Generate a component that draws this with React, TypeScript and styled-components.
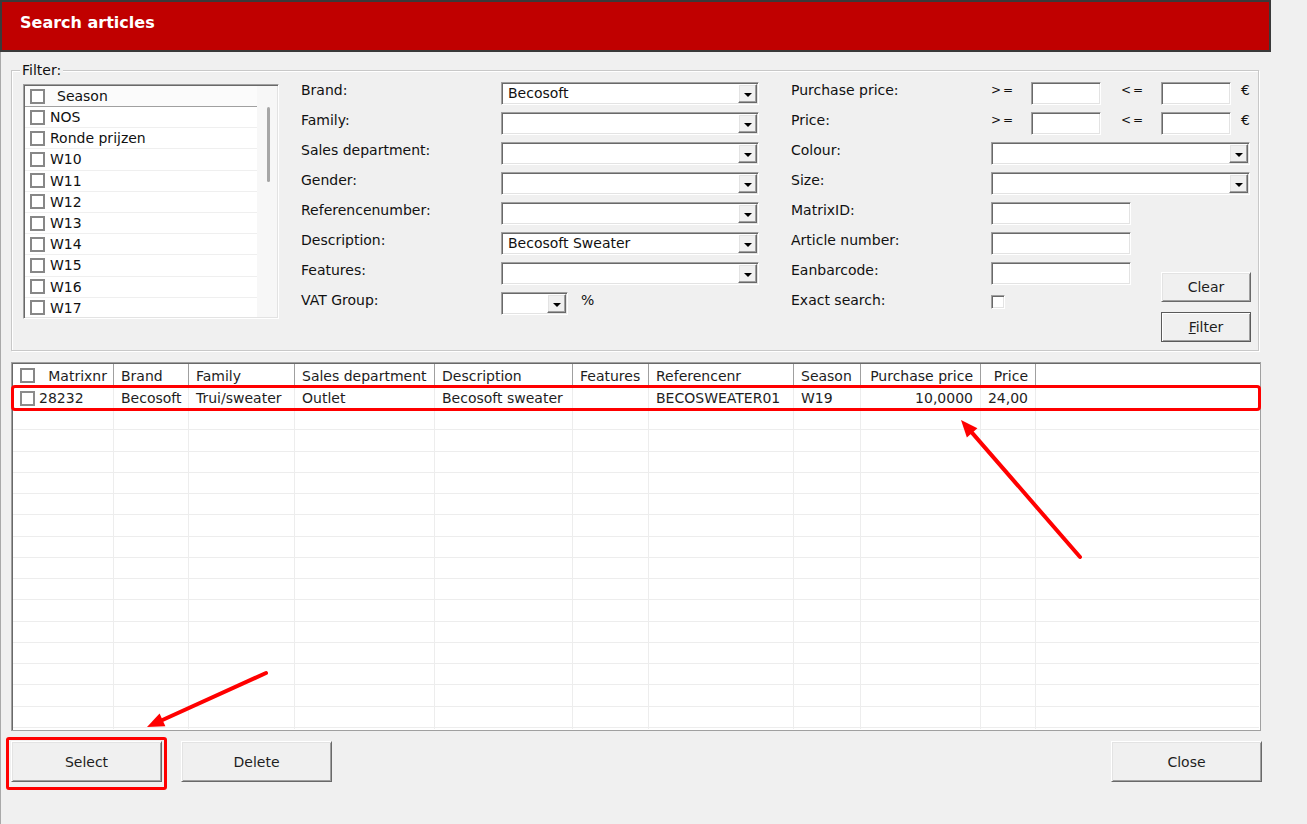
import React from 'react'
import styled, { createGlobalStyle, css } from 'styled-components'

const GlobalStyle = createGlobalStyle`
  html, body {
    margin: 0;
    padding: 0;
    background: #f0f0f0;
  }
  body {
    font-family: "DejaVu Sans", Verdana, sans-serif;
    font-size: 14px;
    color: #111;
  }
  * {
    box-sizing: border-box;
  }
`

// classic windows 3d "sunken" edit look
const sunken = css`
  border: 1px solid;
  border-color: #a0a0a0 #ffffff #ffffff #a0a0a0;
  box-shadow: inset 1px 1px 0 #696969, inset -1px -1px 0 #e3e3e3;
  padding: 1px;
  background: #fff;
`

const Window = styled.div`
  position: relative;
  width: 1307px;
  height: 824px;
  overflow: hidden;
  background: #f0f0f0;
`

const TitleBar = styled.div`
  width: 1271px;
  height: 52px;
  border: 2px solid #3a3a3a;
  background: #c00000;
  color: #fff;
  font-weight: bold;
  font-size: 16px;
  line-height: 18px;
  padding: 12px 0 0 18px;
`

const Body = styled.div`
  height: 772px;
  border-left: 1px solid #a9a9a9;
  padding: 18px 0 0 10px;
`

const GroupBox = styled.div`
  position: relative;
  width: 1248px;
  height: 281px;
  border: 1px solid #c8c8c8;
  box-shadow: inset 1px 1px 0 #fff, 1px 1px 0 #fff;
  padding: 11px 0 0 11px;
  display: flex;
  align-items: flex-start;
`

const GroupLegend = styled.span`
  position: absolute;
  top: -9px;
  left: 8px;
  padding: 0 2px;
  line-height: 16px;
  background: #f0f0f0;
`

const SeasonList = styled.div`
  ${sunken}
  width: 256px;
  height: 235px;
  margin-top: 2px;
  display: flex;
  overflow: hidden;
`

const SeasonColumn = styled.div`
  width: 232px;
  flex-shrink: 0;
`

const SeasonHeader = styled.div`
  height: 21px;
  display: flex;
  align-items: center;
  gap: 12px;
  padding-left: 5px;
  border-bottom: 1px solid #a0a0a0;
  background: #fbfbfb;
`

const SeasonRow = styled.div`
  height: 21.2px;
  display: flex;
  align-items: center;
  gap: 5px;
  padding-left: 5px;
  border-bottom: 1px solid #efefef;
  white-space: nowrap;
`

const ScrollTrack = styled.div`
  flex: 1;
  background: #f7f7f7;
`

const ScrollThumb = styled.div`
  width: 3px;
  height: 75px;
  margin: 21px 0 0 10px;
  border-radius: 2px;
  background: #a6a6a6;
`

const CheckBox = styled.span`
  width: 15px;
  height: 15px;
  flex-shrink: 0;
  border: 2px solid #878787;
  background: #fff;
`

const SmallCheck = styled.span`
  ${sunken}
  width: 14px;
  height: 14px;
  margin-top: 3px;
`

const MiddleForm = styled.div`
  display: grid;
  grid-template-columns: 200px 258px;
  grid-auto-rows: 23px;
  row-gap: 7px;
  margin-left: 22px;
`

const RightForm = styled.div`
  display: grid;
  grid-template-columns: 200px 140px 30px 90px;
  grid-auto-rows: 23px;
  row-gap: 7px;
  margin-left: 32px;
`

const Label = styled.div`
  grid-column: 1;
  line-height: 16px;
  white-space: nowrap;
`

const Field = styled.div<{ $span?: string }>`
  grid-column: ${p => p.$span ?? 'auto'};
  display: flex;
  align-items: flex-start;
`

const Combo = styled.div<{ $width: number }>`
  ${sunken}
  width: ${p => p.$width}px;
  height: 23px;
  display: flex;
`

const ComboText = styled.span`
  flex: 1;
  padding-left: 5px;
  line-height: 19px;
  white-space: nowrap;
  overflow: hidden;
`

const DropButton = styled.span`
  width: 19px;
  flex-shrink: 0;
  display: flex;
  align-items: center;
  justify-content: center;
  background: #f0f0f0;
  border: 1px solid;
  border-color: #ffffff #696969 #696969 #ffffff;
  box-shadow: inset -1px -1px 0 #a0a0a0, inset 1px 1px 0 #e3e3e3;

  &::after {
    content: '';
    margin-top: 2px;
    border-left: 4px solid transparent;
    border-right: 4px solid transparent;
    border-top: 4px solid #000;
  }
`

const TextInput = styled.div<{ $width: number }>`
  ${sunken}
  width: ${p => p.$width}px;
  height: 23px;
`

const Op = styled.span<{ $lead?: boolean }>`
  width: ${p => (p.$lead ? 60 : 40)}px;
  padding-left: ${p => (p.$lead ? 20 : 0)}px;
  font-size: 12px;
  letter-spacing: 2px;
  line-height: 16px;
`

const Unit = styled.span<{ $gap: number }>`
  margin-left: ${p => p.$gap}px;
  line-height: 16px;
`

const ButtonStack = styled.div`
  grid-column: 4;
  grid-row: 7 / span 3;
  display: flex;
  flex-direction: column;
  gap: 10px;
  padding-top: 10px;
`

const PushButton = styled.button<{ $w: number; $h: number; $default?: boolean; $marked?: boolean }>`
  position: relative;
  width: ${p => p.$w}px;
  height: ${p => p.$h}px;
  flex-shrink: 0;
  padding: 0;
  font: inherit;
  color: #1e1e1e;
  background: #f0f0f0;
  border: 1px solid;
  border-color: ${p => (p.$default ? '#5a5a5a' : '#ffffff #696969 #696969 #ffffff')};
  box-shadow: ${p =>
    p.$default
      ? 'inset 1px 1px 0 #fff, inset -1px -1px 0 #a0a0a0'
      : 'inset 1px 1px 0 #e3e3e3, inset -1px -1px 0 #a0a0a0'};

  ${p =>
    p.$marked &&
    css`
      &::after {
        content: '';
        position: absolute;
        left: -6px;
        right: -6px;
        top: -5px;
        bottom: -9px;
        border: 3px solid #ff0000;
        border-radius: 3px;
      }
    `}
`

const GridFrame = styled.div`
  width: 1250px;
  height: 369px;
  margin-top: 11px;
  border: 1px solid #a0a0a0;
  box-shadow: inset 1px 1px 0 #696969;
  padding: 1px;
  background: #fff;
  display: flex;
  flex-direction: column;
`

const HeaderRow = styled.div`
  height: 23px;
  flex-shrink: 0;
  display: flex;
  box-shadow: inset 0 -1px 0 #e2e2e2;
`

const HeadCell = styled.div<{ $w: number; $right?: boolean }>`
  width: ${p => p.$w}px;
  flex-shrink: 0;
  display: flex;
  align-items: center;
  justify-content: ${p => (p.$right ? 'flex-end' : 'flex-start')};
  padding: 0 7px;
  border-right: 1px solid #a0a0a0;
  color: #1e1e1e;
  white-space: nowrap;
  overflow: hidden;
`

const MatrixHead = styled(HeadCell)`
  justify-content: space-between;
  padding: 0 6px 0 7px;
`

const DataRow = styled.div`
  position: relative;
  z-index: 1;
  height: 22px;
  flex-shrink: 0;
  display: flex;
  outline: 3px solid #ff0000;
  outline-offset: -1px;
  border-radius: 2px;
`

const EmptyRows = styled.div`
  flex: 1;
  overflow: hidden;
`

const EmptyRow = styled.div`
  height: 21.25px;
  display: flex;
  border-bottom: 1px solid #ededed;
`

const BodyCell = styled.div<{ $w: number; $right?: boolean }>`
  width: ${p => p.$w}px;
  flex-shrink: 0;
  display: flex;
  align-items: center;
  justify-content: ${p => (p.$right ? 'flex-end' : 'flex-start')};
  gap: 4px;
  padding: 0 7px;
  border-right: 1px solid #ededed;
  color: #1e1e1e;
  white-space: nowrap;
  overflow: hidden;
`

const CellCheck = styled(CheckBox)`
  border-color: #8c8c8c;
`

const Filler = styled.div`
  flex: 1;
`

const ButtonBar = styled.div`
  display: flex;
  gap: 19px;
  width: 1251px;
  margin-top: 10px;
`

const CloseButton = styled(PushButton)`
  margin-left: auto;
`

const Annotations = styled.svg`
  position: absolute;
  top: 0;
  left: 0;
  pointer-events: none;
`

type Column = { key: string; title: string; width: number; right?: boolean }

const columns: Column[] = [
  { key: 'matrix', title: 'Matrixnr', width: 101 },
  { key: 'brand', title: 'Brand', width: 75 },
  { key: 'family', title: 'Family', width: 106 },
  { key: 'sales', title: 'Sales department', width: 140 },
  { key: 'desc', title: 'Description', width: 138 },
  { key: 'features', title: 'Features', width: 76 },
  { key: 'ref', title: 'Referencenr', width: 145 },
  { key: 'season', title: 'Season', width: 67 },
  { key: 'purchase', title: 'Purchase price', width: 120, right: true },
  { key: 'price', title: 'Price', width: 55, right: true },
]

const article: Record<string, string> = {
  matrix: '28232',
  brand: 'Becosoft',
  family: 'Trui/sweater',
  sales: 'Outlet',
  desc: 'Becosoft sweater',
  features: '',
  ref: 'BECOSWEATER01',
  season: 'W19',
  purchase: '10,0000',
  price: '24,00',
}

const seasons = ['NOS', 'Ronde prijzen', 'W10', 'W11', 'W12', 'W13', 'W14', 'W15', 'W16', 'W17']

const middleFields: [string, string?][] = [
  ['Brand:', 'Becosoft'],
  ['Family:'],
  ['Sales department:'],
  ['Gender:'],
  ['Referencenumber:'],
  ['Description:', 'Becosoft Sweater'],
  ['Features:'],
]

const ComboBox = ({ width, value }: { width: number; value?: string }) => (
  <Combo $width={width}>
    <ComboText>{value}</ComboText>
    <DropButton />
  </Combo>
)

const Arrow = ({ from, to }: { from: [number, number]; to: [number, number] }) => {
  const [x1, y1] = from
  const [x2, y2] = to
  const len = Math.hypot(x2 - x1, y2 - y1)
  const ux = (x2 - x1) / len
  const uy = (y2 - y1) / len
  const head = 17
  const half = 7
  const bx = x2 - ux * head
  const by = y2 - uy * head
  const points = `${x2},${y2} ${bx - uy * half},${by + ux * half} ${bx + uy * half},${by - ux * half}`
  return (
    <g>
      <line x1={x1} y1={y1} x2={bx} y2={by} stroke="#ff0000" strokeWidth={4} strokeLinecap="round" />
      <polygon points={points} fill="#ff0000" />
    </g>
  )
}

const PriceRange = () => (
  <Field $span="2 / 5">
    <Op>&gt;=</Op>
    <TextInput $width={70} />
    <Op $lead>&lt;=</Op>
    <TextInput $width={70} />
    <Unit $gap={10}>€</Unit>
  </Field>
)

export default function App() {
  return (
    <Window>
      <GlobalStyle />
      <TitleBar>Search articles</TitleBar>
      <Body>
        <GroupBox>
          <GroupLegend>Filter:</GroupLegend>

          <SeasonList>
            <SeasonColumn>
              <SeasonHeader>
                <CheckBox />
                <span>Season</span>
              </SeasonHeader>
              {seasons.map(s => (
                <SeasonRow key={s}>
                  <CheckBox />
                  {s}
                </SeasonRow>
              ))}
            </SeasonColumn>
            <ScrollTrack>
              <ScrollThumb />
            </ScrollTrack>
          </SeasonList>

          <MiddleForm>
            {middleFields.map(([label, value]) => (
              <React.Fragment key={label}>
                <Label>{label}</Label>
                <Field>
                  <ComboBox width={258} value={value} />
                </Field>
              </React.Fragment>
            ))}
            <Label>VAT Group:</Label>
            <Field>
              <ComboBox width={67} />
              <Unit $gap={13}>%</Unit>
            </Field>
          </MiddleForm>

          <RightForm>
            <ButtonStack>
              <PushButton $w={90} $h={30}>Clear</PushButton>
              <PushButton $w={90} $h={30} $default>
                <u>F</u>ilter
              </PushButton>
            </ButtonStack>

            <Label>Purchase price:</Label>
            <PriceRange />
            <Label>Price:</Label>
            <PriceRange />
            <Label>Colour:</Label>
            <Field $span="2 / 5">
              <ComboBox width={259} />
            </Field>
            <Label>Size:</Label>
            <Field $span="2 / 5">
              <ComboBox width={259} />
            </Field>
            <Label>MatrixID:</Label>
            <Field $span="2 / 3">
              <TextInput $width={140} />
            </Field>
            <Label>Article number:</Label>
            <Field $span="2 / 3">
              <TextInput $width={140} />
            </Field>
            <Label>Eanbarcode:</Label>
            <Field $span="2 / 3">
              <TextInput $width={140} />
            </Field>
            <Label>Exact search:</Label>
            <Field $span="2 / 3">
              <SmallCheck />
            </Field>
          </RightForm>
        </GroupBox>

        <GridFrame>
          <HeaderRow>
            {columns.map(c =>
              c.key === 'matrix' ? (
                <MatrixHead key={c.key} $w={c.width}>
                  <CheckBox />
                  {c.title}
                </MatrixHead>
              ) : (
                <HeadCell key={c.key} $w={c.width} $right={c.right}>
                  {c.title}
                </HeadCell>
              )
            )}
            <Filler />
          </HeaderRow>

          <DataRow>
            {columns.map(c => (
              <BodyCell key={c.key} $w={c.width} $right={c.right}>
                {c.key === 'matrix' && <CellCheck />}
                {article[c.key]}
              </BodyCell>
            ))}
            <Filler />
          </DataRow>

          <EmptyRows>
            {Array.from({ length: 16 }, (_, i) => (
              <EmptyRow key={i}>
                {columns.map(c => (
                  <BodyCell key={c.key} $w={c.width} />
                ))}
                <Filler />
              </EmptyRow>
            ))}
          </EmptyRows>
        </GridFrame>

        <ButtonBar>
          <PushButton $w={151} $h={41} $marked>
            Select
          </PushButton>
          <PushButton $w={151} $h={41}>
            Delete
          </PushButton>
          <CloseButton $w={151} $h={41}>
            Close
          </CloseButton>
        </ButtonBar>
      </Body>

      <Annotations width={1307} height={824}>
        <Arrow from={[1080, 557]} to={[961, 420]} />
        <Arrow from={[266, 673]} to={[147, 727]} />
      </Annotations>
    </Window>
  )
}
